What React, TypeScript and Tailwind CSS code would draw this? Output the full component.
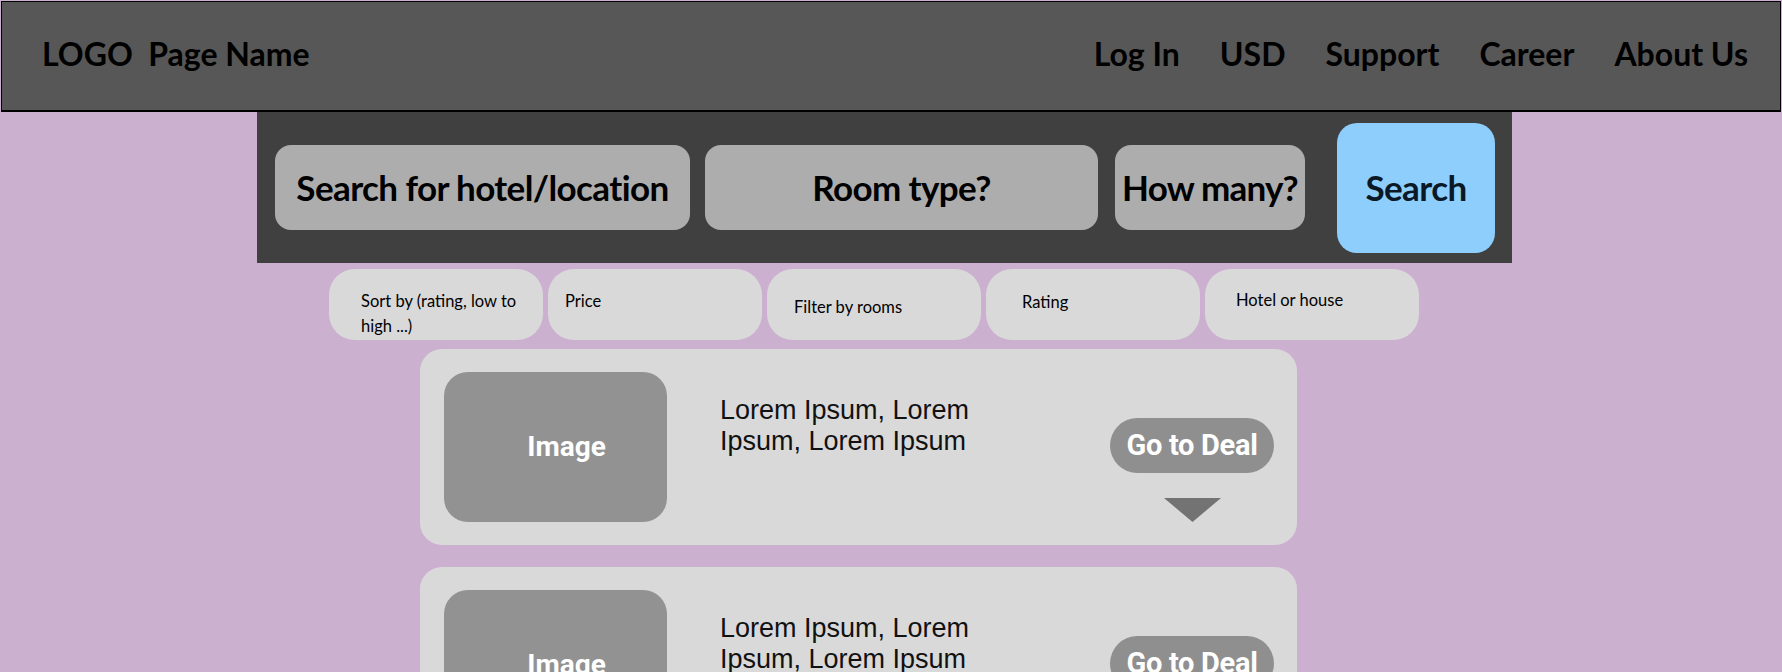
import React from "react";

const chips = [
  { label: "Sort by (rating, low to high ...)", cls: "pl-[32px] pt-[20px] pr-[14px]" },
  { label: "Price", cls: "pl-[17px] pt-[20px]" },
  { label: "Filter by rooms", cls: "pl-[27px] pt-[26px]" },
  { label: "Rating", cls: "pl-[36px] pt-[21px]" },
  { label: "Hotel or house", cls: "pl-[31px] pt-[19px]" },
];

function Card() {
  return (
    <div className="flex h-[196px] w-[877px] shrink-0 rounded-[22px] bg-[#d9d9d9]">
      <div className="ml-[24px] mt-[23px] flex h-[150px] w-[223px] shrink-0 items-center justify-center rounded-[24px] bg-[#929292] pl-[22px]">
        <span className="font-['Roboto',sans-serif] text-[28px] font-bold text-white">Image</span>
      </div>
      <div className="ml-[53px] flex-1 pt-[46px] font-['Liberation_Sans','Roboto',sans-serif] text-[27px] leading-[31px] text-[#111]">
        Lorem Ipsum, Lorem
        <br />
        Ipsum, Lorem Ipsum
      </div>
      <div className="mr-[23px] flex w-[164px] flex-col items-center pt-[69px]">
        <div className="flex h-[55px] w-[164px] items-center justify-center rounded-full bg-[#8f8f8f]">
          <span className="font-['Roboto',sans-serif] text-[29px] font-bold tracking-[-0.3px] text-white">Go to Deal</span>
        </div>
        <svg className="mt-[25px]" width="57" height="24" viewBox="0 0 57 24">
          <polygon points="0,0 57,0 28.5,24" fill="#737373" />
        </svg>
      </div>
    </div>
  );
}

export default function App() {
  return (
    <div className="h-screen w-full overflow-hidden bg-[#ccb0d0] pt-[1px]">
      <header className="ml-[1px] flex h-[111px] w-[1780px] items-center justify-between border border-b-2 border-black bg-[#575757] pb-[4px] pl-[40px] pr-[32px] font-['Lato',sans-serif] text-[32px] font-bold text-black">
        <div className="whitespace-pre">LOGO  Page Name</div>
        <nav className="flex items-center gap-[40px]">
          <span>Log In</span>
          <span>USD</span>
          <span>Support</span>
          <span>Career</span>
          <span>About Us</span>
        </nav>
      </header>

      <div className="ml-[257px] flex h-[151px] w-[1255px] items-center bg-[#404040] pl-[18px] font-['Lato',sans-serif] font-bold text-black">
        <div className="flex h-[85px] w-[415px] items-center justify-center rounded-[16px] bg-[#adadad] text-[35px] tracking-[-0.6px]">
          Search for hotel/location
        </div>
        <div className="ml-[15px] flex h-[85px] w-[393px] items-center justify-center rounded-[16px] bg-[#adadad] text-[35px] tracking-[-0.6px]">
          Room type?
        </div>
        <div className="ml-[17px] flex h-[85px] w-[190px] items-center justify-center rounded-[16px] bg-[#adadad] text-[35px] tracking-[-0.8px]">
          How many?
        </div>
        <div className="ml-[32px] flex h-[130px] w-[158px] items-center justify-center rounded-[20px] bg-[#8ecefd] text-[35px] tracking-[-0.6px] text-[#0b1825]">
          Search
        </div>
      </div>

      <div className="ml-[329px] mt-[6px] flex gap-[5px]">
        {chips.map((c) => (
          <div
            key={c.label}
            className={`h-[71px] w-[214px] rounded-[26px] bg-[#d9d9d9] font-['Lato',sans-serif] text-[16.5px] leading-[25px] text-black ${c.cls}`}
          >
            {c.label}
          </div>
        ))}
      </div>

      <div className="ml-[420px] mt-[9px] flex flex-col gap-[22px]">
        <Card />
        <Card />
      </div>
    </div>
  );
}
